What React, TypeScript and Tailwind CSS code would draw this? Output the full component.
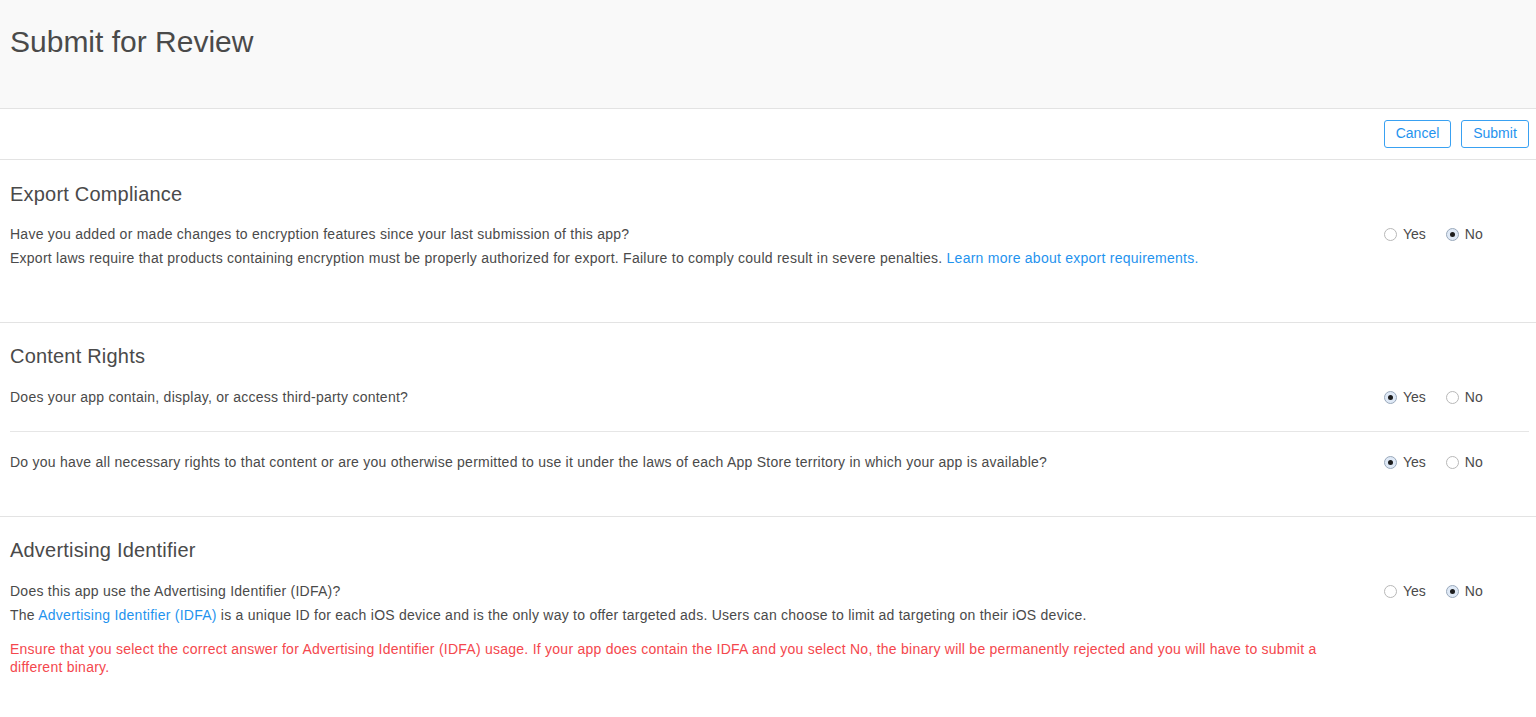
import { useState } from 'react'

type Answer = 'yes' | 'no'

function Radio({ checked, label, onClick }: { checked: boolean; label: string; onClick: () => void }) {
  return (
    <button type="button" onClick={onClick} className="flex items-center gap-[6px] text-[14px] leading-[24px] text-[#4a4a4a]">
      <span
        className={
          checked
            ? 'flex h-[13px] w-[13px] items-center justify-center rounded-full border border-[#9aa9bb] bg-[#dfe9f6]'
            : 'h-[13px] w-[13px] rounded-full border border-[#b8b8b8] bg-white'
        }
      >
        {checked && <span className="h-[5px] w-[5px] rounded-full bg-[#1d1d1d]" />}
      </span>
      {label}
    </button>
  )
}

function YesNo({ value, onChange }: { value: Answer; onChange: (v: Answer) => void }) {
  return (
    <div className="flex w-[145px] shrink-0 items-start gap-[20px]">
      <Radio checked={value === 'yes'} label="Yes" onClick={() => onChange('yes')} />
      <Radio checked={value === 'no'} label="No" onClick={() => onChange('no')} />
    </div>
  )
}

export default function App() {
  const [encryption, setEncryption] = useState<Answer>('no')
  const [thirdParty, setThirdParty] = useState<Answer>('yes')
  const [rights, setRights] = useState<Answer>('yes')
  const [idfa, setIdfa] = useState<Answer>('no')

  return (
    <div className="min-h-screen bg-white text-[#4a4a4a]" style={{ fontFamily: '"Liberation Sans", Arial, sans-serif' }}>
      <div className="h-[109px] border-b border-[#e3e3e3] bg-[#f9f9f9] px-[10px] pt-[24px]">
        <h1 className="text-[30px] font-light leading-[36px] text-[#4a4a4a]">Submit for Review</h1>
      </div>

      <div className="flex h-[51px] items-center justify-end gap-[10px] border-b border-[#e3e3e3] pr-[7px]">
        <button className="h-[28px] w-[67px] rounded-[3px] border border-[#39a1f2] pb-[1px] text-[14px] text-[#1f93ee]">Cancel</button>
        <button className="h-[28px] w-[68px] rounded-[3px] border border-[#39a1f2] pb-[1px] text-[14px] text-[#1f93ee]">Submit</button>
      </div>

      <section className="border-b border-[#e3e3e3] pl-[10px] pr-[7px] pt-[22px] pb-[52px]">
        <h2 className="text-[20px] leading-[24px] tracking-[0.2px] text-[#4a4a4a]">Export Compliance</h2>
        <div className="mt-[16px] flex justify-between gap-[10px]">
          <div className="text-[14px] leading-[24px] tracking-[0.25px]">
            <p>Have you added or made changes to encryption features since your last submission of this app?</p>
            <p>
              Export laws require that products containing encryption must be properly authorized for export. Failure to comply could result in severe
              penalties. <a className="text-[#1f93ee]">Learn more about export requirements.</a>
            </p>
          </div>
          <YesNo value={encryption} onChange={setEncryption} />
        </div>
      </section>

      <section className="border-b border-[#e3e3e3] pl-[10px] pr-[7px] pt-[21px] pb-[42px]">
        <h2 className="text-[20px] leading-[24px] tracking-[0.2px] text-[#4a4a4a]">Content Rights</h2>
        <div className="mt-[17px] flex justify-between gap-[10px] border-b border-[#e6e6e6] pb-[22px]">
          <p className="text-[14px] leading-[24px] tracking-[0.25px]">Does your app contain, display, or access third-party content?</p>
          <YesNo value={thirdParty} onChange={setThirdParty} />
        </div>
        <div className="mt-[18px] flex justify-between gap-[10px]">
          <p className="text-[14px] leading-[24px] tracking-[0.25px]">
            Do you have all necessary rights to that content or are you otherwise permitted to use it under the laws of each App Store territory in which
            your app is available?
          </p>
          <YesNo value={rights} onChange={setRights} />
        </div>
      </section>

      <section className="pl-[10px] pr-[7px] pt-[21px] pb-[40px]">
        <h2 className="text-[20px] leading-[24px] tracking-[0.2px] text-[#4a4a4a]">Advertising Identifier</h2>
        <div className="mt-[17px] flex justify-between gap-[10px]">
          <div className="text-[14px] leading-[24px] tracking-[0.25px]">
            <p>Does this app use the Advertising Identifier (IDFA)?</p>
            <p>
              The <a className="text-[#1f93ee]">Advertising Identifier (IDFA)</a> is a unique ID for each iOS device and is the only way to offer targeted
              ads. Users can choose to limit ad targeting on their iOS device.
            </p>
            <p className="mt-[13px] max-w-[1310px] leading-[18px] text-[#f4474d]">
              Ensure that you select the correct answer for Advertising Identifier (IDFA) usage. If your app does contain the IDFA and you select No, the
              binary will be permanently rejected and you will have to submit a different binary.
            </p>
          </div>
          <YesNo value={idfa} onChange={setIdfa} />
        </div>
      </section>
    </div>
  )
}
